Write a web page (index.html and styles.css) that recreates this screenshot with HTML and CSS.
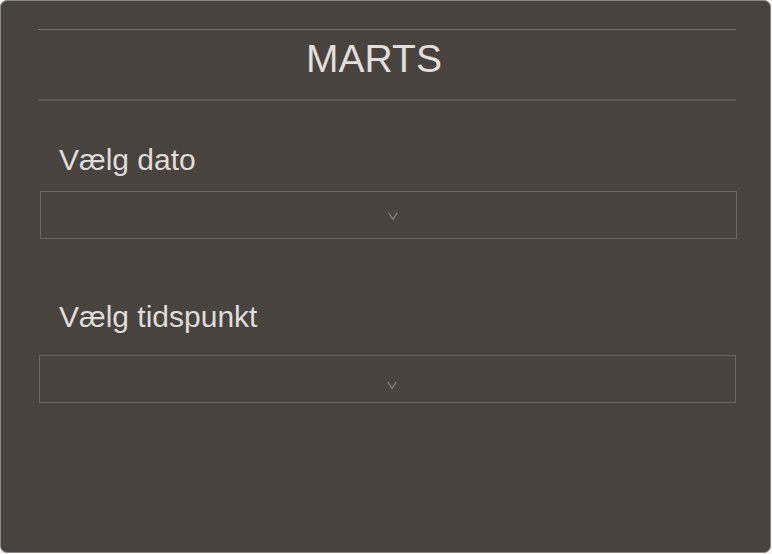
FILE: index.html
```html
<!DOCTYPE html>
<html lang="da">
<head>
<meta charset="utf-8">
<title>Marts</title>
<link rel="stylesheet" href="styles.css">
</head>
<body>
<div class="panel">
  <div class="header">MARTS</div>
  <div class="label label-date">Vælg dato</div>
  <div class="select select-date">
    <svg class="chev" width="10" height="8" viewBox="0 0 10 8"><polyline points="0.6,0.6 5,7.4 9.4,0.6" fill="none" stroke="#8c8683" stroke-width="1.1"/></svg>
  </div>
  <div class="label label-time">Vælg tidspunkt</div>
  <div class="select select-time">
    <svg class="chev" width="10" height="8" viewBox="0 0 10 8"><polyline points="0.6,0.6 5,7.4 9.4,0.6" fill="none" stroke="#8c8683" stroke-width="1.1"/></svg>
  </div>
</div>
</body>
</html>
```
FILE: styles.css
```css
html, body {
  margin: 0;
  padding: 0;
  background: #f4f4f4;
}
body {
  font-family: "Liberation Sans", Arial, sans-serif;
}
.panel {
  box-sizing: border-box;
  width: 771px;
  height: 553px;
  background: #48433f;
  border: 1px solid #8a8785;
  border-radius: 7px;
  padding: 28px 34px 0 37px;
  display: flex;
  flex-direction: column;
  align-items: flex-start;
}
.header {
  box-sizing: border-box;
  width: 698px;
  height: 72px;
  border-top: 1px solid #78716e;
  border-bottom: 2px solid #5d5754;
  padding-top: 6px;
  padding-right: 26px;
  text-align: center;
  font-size: 39px;
  line-height: 45px;
  color: #e2dedb;
}
.label {
  font-size: 30px;
  line-height: 34px;
  color: #e0dcd9;
  margin-left: 21px;
}
.label-date {
  margin-top: 42px;
}
.label-time {
  margin-top: 61px;
}
.select {
  box-sizing: border-box;
  width: 697px;
  height: 48px;
  border: 1px solid #6c6663;
  display: flex;
  justify-content: center;
  align-items: flex-start;
  padding-left: 9px;
}
.select-date {
  margin-top: 14px;
  margin-left: 2px;
  padding-top: 20px;
}
.select-time {
  margin-top: 21px;
  margin-left: 1px;
  padding-top: 25px;
}
.chev {
  display: block;
}
```
